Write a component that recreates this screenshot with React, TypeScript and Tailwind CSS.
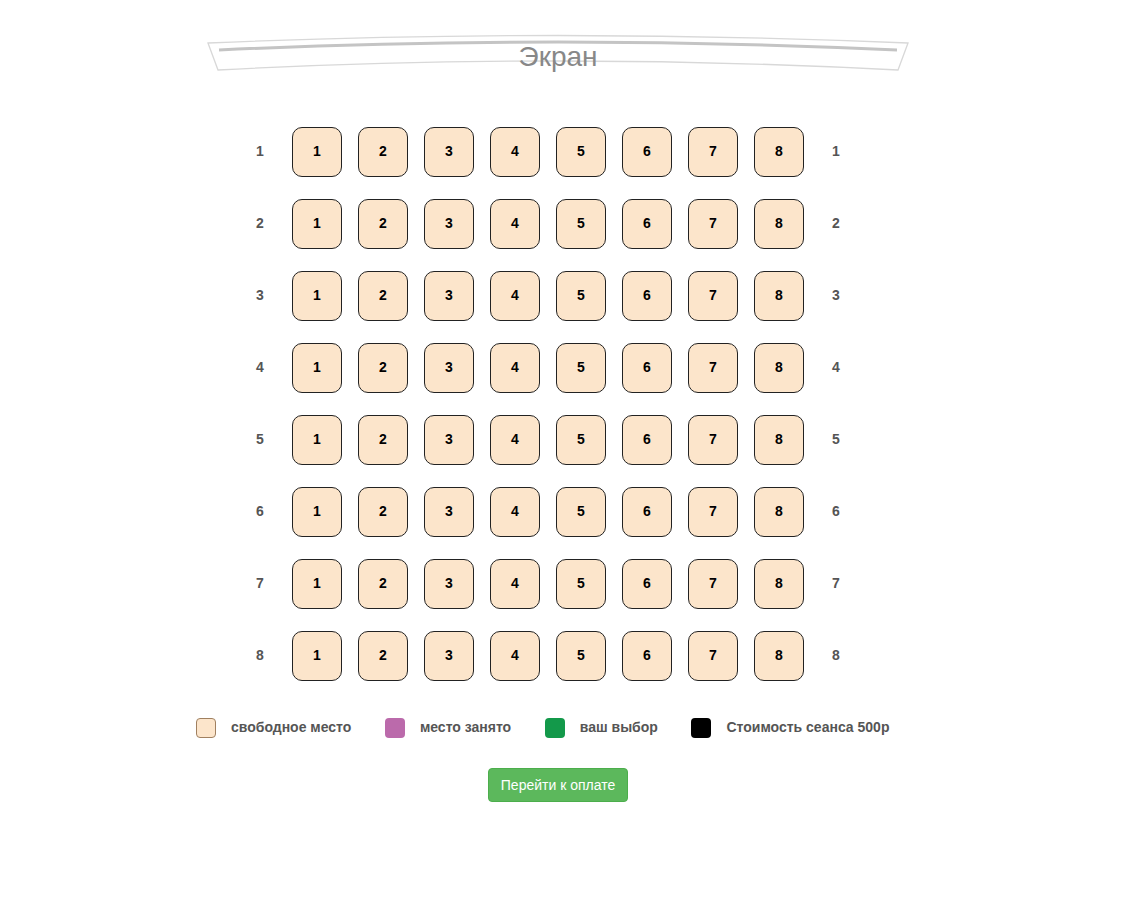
const rows = [1, 2, 3, 4, 5, 6, 7, 8];
const seats = [1, 2, 3, 4, 5, 6, 7, 8];

const legend = [
    { label: 'свободное место', cls: 'bg-[#fce5cb] border border-[#a08060]' },
    { label: 'место занято', cls: 'bg-[#bb6aab]' },
    { label: 'ваш выбор', cls: 'bg-[#13994a]' },
    { label: 'Стоимость сеанса 500р', cls: 'bg-black' },
];

const Screen = () => (
    <div className="relative w-[702px] h-[40px] ml-[207px] mt-[34px]">
        <svg width="702" height="40" viewBox="0 0 702 40" className="absolute inset-0">
            {/* outer frame */}
            <path
                d="M1 9 Q351 -6 701 9 L691 36 Q351 18 11 36 Z"
                fill="white"
                stroke="#d8d8d8"
                strokeWidth="1.3"
            />
            {/* inner line */}
            <path d="M12 16 Q351 0 690 16" fill="none" stroke="#c4c4c4" strokeWidth="3" />
        </svg>
        <div className="absolute inset-x-0 top-[5px] text-center text-[28px] leading-[36px] text-[#888] font-['Liberation_Sans',Arial,sans-serif]">
            Экран
        </div>
    </div>
);

export default function App() {
    return (
        <div className="min-h-[905px] w-full bg-white font-['Liberation_Sans',Arial,sans-serif]">
            <Screen />

            {/* Seat grid */}
            <div className="flex flex-col gap-[22px] ml-[242px] mt-[53px]">
                {rows.map((r) => (
                    <div key={r} className="flex items-center">
                        <div className="w-[36px] mr-[14px] -translate-y-px text-center text-sm font-bold text-[#555]">{r}</div>
                        <div className="flex gap-4">
                            {seats.map((s) => (
                                <button
                                    key={s}
                                    className="w-[50px] h-[50px] rounded-[10px] border border-[#222] bg-[#fce5cb] text-sm font-bold text-black flex items-center justify-center"
                                >
                                    <span className="-translate-y-px">{s}</span>
                                </button>
                            ))}
                        </div>
                        <div className="w-[36px] ml-[14px] -translate-y-px text-center text-sm font-bold text-[#555]">{r}</div>
                    </div>
                ))}
            </div>

            {/* Legend */}
            <div className="flex items-center ml-[196px] mt-[37px] h-5">
                {legend.map((item) => (
                    <div key={item.label} className="flex items-center mr-[33.6px]">
                        <span className={`w-5 h-5 rounded-[4px] ${item.cls}`}></span>
                        <span className="ml-[15px] -translate-y-px text-sm font-bold text-[#555]">{item.label}</span>
                    </div>
                ))}
            </div>

            {/* Pay button */}
            <div className="flex ml-[488px] mt-[30px]">
                <button className="w-[140px] h-[34px] rounded-[4px] bg-[#5cb85c] border border-[#4cae4c] text-sm text-white">
                    Перейти к оплате
                </button>
            </div>
        </div>
    );
}
